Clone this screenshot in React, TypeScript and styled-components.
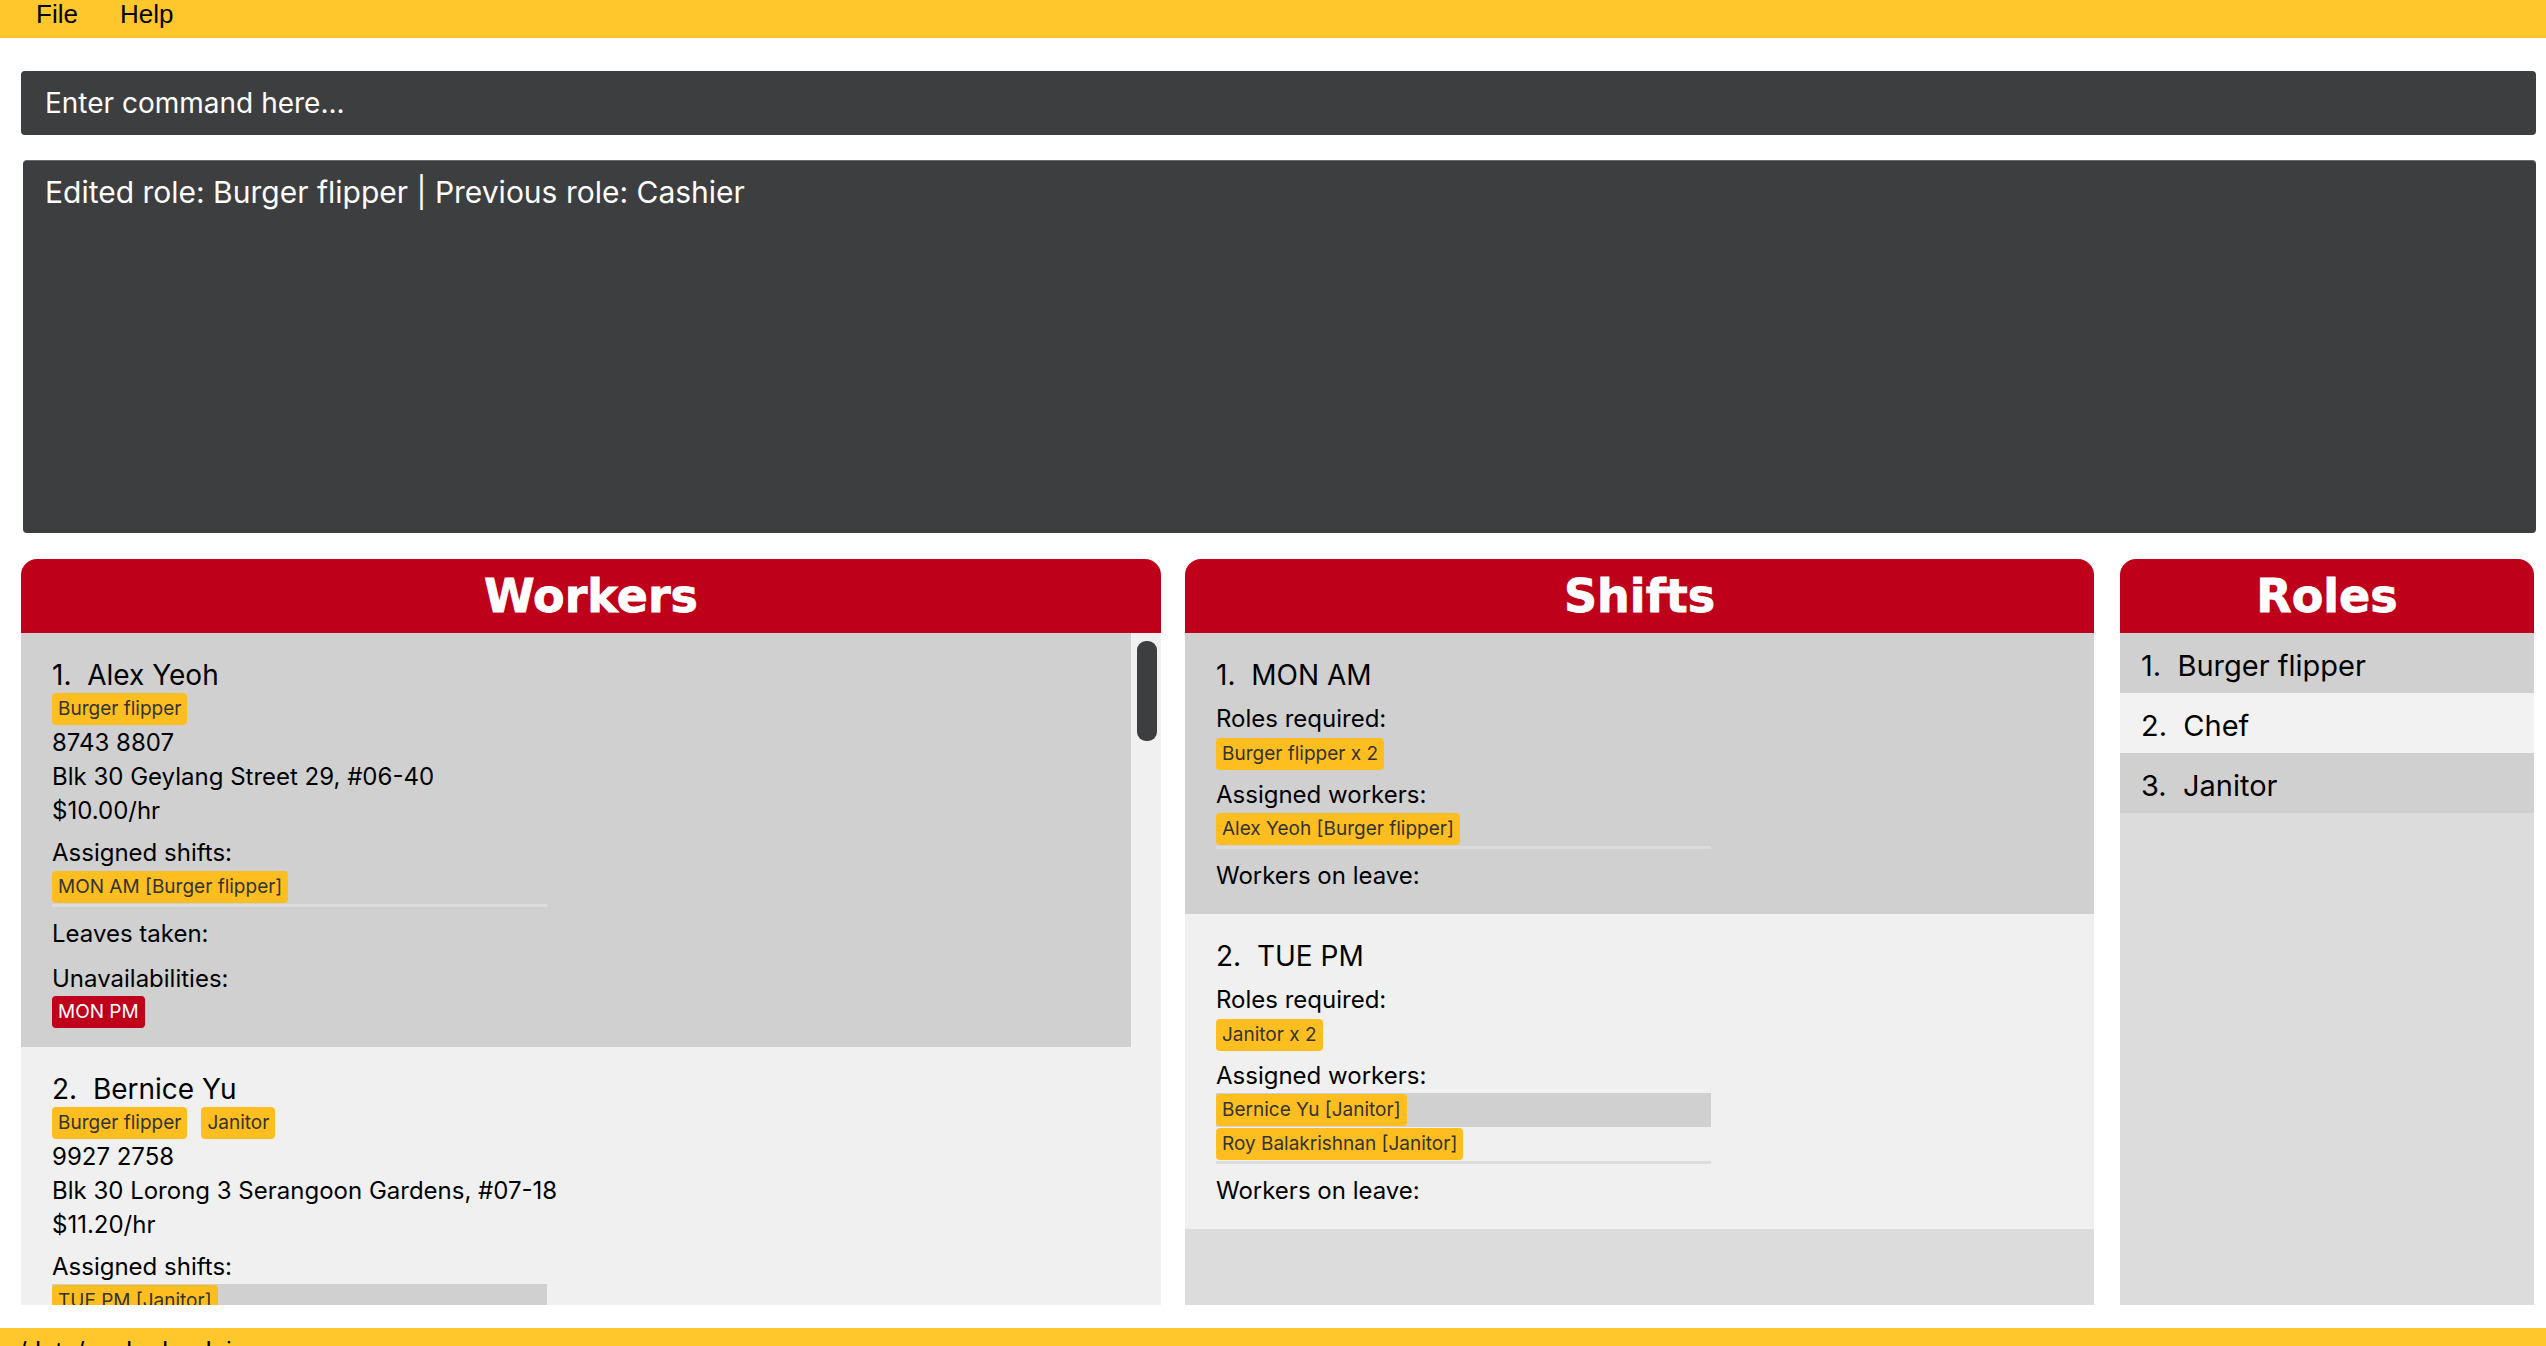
import React from "react";
import styled, { createGlobalStyle } from "styled-components";

const GlobalStyle = createGlobalStyle`
  html, body {
    margin: 0;
    padding: 0;
    background: #ffffff;
  }
  body {
    font-family: Inter, "Noto Sans", sans-serif;
    color: #000000;
  }
`;

type Worker = {
  name: string;
  roles: string[];
  phone: string;
  address: string;
  pay: string;
  shifts: string[];
  leaves: string[];
  unavailable: string[];
};

type Shift = {
  name: string;
  roles: string[];
  workers: string[];
  onLeave: string[];
};

const workers: Worker[] = [
  {
    name: "Alex Yeoh",
    roles: ["Burger flipper"],
    phone: "8743 8807",
    address: "Blk 30 Geylang Street 29, #06-40",
    pay: "$10.00/hr",
    shifts: ["MON AM [Burger flipper]"],
    leaves: [],
    unavailable: ["MON PM"],
  },
  {
    name: "Bernice Yu",
    roles: ["Burger flipper", "Janitor"],
    phone: "9927 2758",
    address: "Blk 30 Lorong 3 Serangoon Gardens, #07-18",
    pay: "$11.20/hr",
    shifts: ["TUE PM [Janitor]"],
    leaves: [],
    unavailable: [],
  },
];

const shifts: Shift[] = [
  {
    name: "MON AM",
    roles: ["Burger flipper x 2"],
    workers: ["Alex Yeoh [Burger flipper]"],
    onLeave: [],
  },
  {
    name: "TUE PM",
    roles: ["Janitor x 2"],
    workers: ["Bernice Yu [Janitor]", "Roy Balakrishnan [Janitor]"],
    onLeave: [],
  },
];

const roles = ["Burger flipper", "Chef", "Janitor"];

const Window = styled.div`
  width: 2546px;
  height: 1346px;
  overflow: hidden;
  display: flex;
  flex-direction: column;
`;

const MenuBar = styled.div`
  height: 38px;
  flex-shrink: 0;
  background: #ffc72c;
  display: flex;
  align-items: flex-start;
  gap: 42px;
  padding-left: 36px;
`;

const MenuItem = styled.span`
  font-family: "Liberation Sans", Arial, sans-serif;
  font-size: 26px;
  line-height: 28px;
  color: #000000;
`;

const Content = styled.div`
  display: flex;
  flex-direction: column;
  padding: 33px 10px 0 21px;
  flex-shrink: 0;
`;

const CommandBox = styled.input`
  height: 64px;
  box-sizing: border-box;
  border: none;
  outline: none;
  border-radius: 4px;
  background: #3d3e40;
  color: #ffffff;
  font-family: Inter, "Noto Sans", sans-serif;
  font-size: 28px;
  padding: 0 24px;
  &::placeholder {
    color: #ffffff;
    opacity: 1;
  }
`;

const ResultBox = styled.div`
  margin: 25px 0 0 2px;
  height: 373px;
  box-sizing: border-box;
  border-radius: 4px;
  background: #3d3e40;
  border-top: 1px solid #6a6b6d;
  color: #ffffff;
  font-size: 30px;
  line-height: 36px;
  padding: 13px 22px;
`;

const Panels = styled.div`
  margin-top: 26px;
  height: 746px;
  display: grid;
  grid-template-columns: 1140px 909px 416px;
  column-gap: 24px;
  & > :last-child {
    margin-left: 2px;
  }
`;

const Panel = styled.section`
  display: flex;
  flex-direction: column;
  min-height: 0;
`;

const PanelHeader = styled.div`
  height: 74px;
  flex-shrink: 0;
  background: #be001a;
  border-radius: 16px 16px 0 0;
  color: #ffffff;
  text-align: center;
  font-family: "DejaVu Sans", "Liberation Sans", sans-serif;
  font-weight: 700;
  font-size: 46px;
  line-height: 74px;
  -webkit-text-stroke: 0.8px #ffffff;
`;

const PanelBody = styled.div`
  flex: 1;
  min-height: 0;
  background: #dcdcdc;
  overflow: hidden;
  display: flex;
`;

const CardColumn = styled.div`
  flex: 1;
  min-width: 0;
  overflow: hidden;
  display: flex;
  flex-direction: column;
`;

const ScrollTrack = styled.div`
  width: 30px;
  flex-shrink: 0;
  background: #f0f0f0;
  display: flex;
  flex-direction: column;
`;

const ScrollThumb = styled.div`
  margin: 8px 4px 0 6px;
  height: 100px;
  border-radius: 9px;
  background: #3d3e40;
`;

const Card = styled.div<{ $alt: boolean }>`
  flex-shrink: 0;
  background: ${(p) => (p.$alt ? "#f0f0f0" : "#d0d0d0")};
  padding: 24px 20px 19px 31px;
  display: flex;
  flex-direction: column;
  align-items: flex-start;
`;

const ShiftCard = styled(Card)`
  padding-bottom: 21px;
`;

const Title = styled.div`
  font-size: 28px;
  line-height: 36px;
  white-space: pre;
`;

const Field = styled.div`
  font-size: 24px;
  line-height: 34px;
`;

const Label = styled(Field)<{ $mt: number }>`
  margin-top: ${(p) => p.$mt}px;
`;

const TagRow = styled.div<{ $mt?: number }>`
  display: flex;
  flex-wrap: wrap;
  gap: 14px;
  margin-top: ${(p) => p.$mt ?? 0}px;
`;

const Tag = styled.span<{ $red?: boolean }>`
  display: inline-block;
  height: 32px;
  box-sizing: border-box;
  padding: 3px 6px 0 6px;
  border-radius: 4px;
  background: ${(p) => (p.$red ? "#c0001b" : "#ffbe1f")};
  color: ${(p) => (p.$red ? "#ffffff" : "#333333")};
  font-size: 19px;
  line-height: 26px;
  white-space: nowrap;
`;

const TagList = styled.div<{ $mt: number }>`
  width: 495px;
  margin-top: ${(p) => p.$mt}px;
  border-bottom: 3px solid #dcdcdc;
  display: flex;
  flex-direction: column;
`;

const TagListRow = styled.div<{ $alt: boolean }>`
  height: 34px;
  box-sizing: border-box;
  padding-top: 1px;
  background: ${(p) => (p.$alt ? "transparent" : "#d0d0d0")};
`;

const RoleRow = styled.div<{ $alt: boolean }>`
  height: 60px;
  box-sizing: border-box;
  flex-shrink: 0;
  background: ${(p) => (p.$alt ? "#f2f2f2" : "#d0d0d0")};
  padding: 6px 0 0 21px;
  font-size: 29px;
  line-height: 54px;
  white-space: pre;
`;

const RoleColumn = styled.div`
  flex: 1;
  display: flex;
  flex-direction: column;
`;

const StatusBar = styled.div`
  margin-top: 23px;
  flex: 1;
  background: #ffc72c;
  padding: 9px 0 0 12px;
  font-family: "Liberation Sans", Arial, sans-serif;
  font-size: 26px;
  line-height: 28px;
`;

const TagListView = ({ items, mt }: { items: string[]; mt: number }) => (
  <TagList $mt={mt}>
    {items.map((item, i) => (
      <TagListRow key={item} $alt={i % 2 === 1}>
        <Tag>{item}</Tag>
      </TagListRow>
    ))}
  </TagList>
);

const WorkerCard = ({ worker, index }: { worker: Worker; index: number }) => (
  <Card $alt={index % 2 === 1}>
    <Title>{`${index + 1}.  ${worker.name}`}</Title>
    <TagRow>
      {worker.roles.map((r) => (
        <Tag key={r}>{r}</Tag>
      ))}
    </TagRow>
    <Field style={{ marginTop: 1 }}>{worker.phone}</Field>
    <Field>{worker.address}</Field>
    <Field>{worker.pay}</Field>
    <Label $mt={8}>Assigned shifts:</Label>
    <TagListView items={worker.shifts} mt={0} />
    <Label $mt={10}>Leaves taken:</Label>
    <Label $mt={11}>Unavailabilities:</Label>
    <TagRow>
      {worker.unavailable.map((u) => (
        <Tag key={u} $red>
          {u}
        </Tag>
      ))}
    </TagRow>
  </Card>
);

const ShiftItem = ({ shift, index }: { shift: Shift; index: number }) => (
  <ShiftCard $alt={index % 2 === 1}>
    <Title>{`${index + 1}.  ${shift.name}`}</Title>
    <Label $mt={9}>Roles required:</Label>
    <TagRow $mt={2}>
      {shift.roles.map((r) => (
        <Tag key={r}>{r}</Tag>
      ))}
    </TagRow>
    <Label $mt={8}>Assigned workers:</Label>
    <TagListView items={shift.workers} mt={0} />
    <Label $mt={10}>Workers on leave:</Label>
  </ShiftCard>
);

export default function App() {
  return (
    <>
      <GlobalStyle />
      <Window>
        <MenuBar>
          <MenuItem>File</MenuItem>
          <MenuItem>Help</MenuItem>
        </MenuBar>
        <Content>
          <CommandBox placeholder="Enter command here..." readOnly />
          <ResultBox>Edited role: Burger flipper | Previous role: Cashier</ResultBox>
          <Panels>
            <Panel>
              <PanelHeader>Workers</PanelHeader>
              <PanelBody>
                <CardColumn>
                  {workers.map((w, i) => (
                    <WorkerCard key={w.name} worker={w} index={i} />
                  ))}
                </CardColumn>
                <ScrollTrack>
                  <ScrollThumb />
                </ScrollTrack>
              </PanelBody>
            </Panel>
            <Panel>
              <PanelHeader>Shifts</PanelHeader>
              <PanelBody>
                <CardColumn>
                  {shifts.map((s, i) => (
                    <ShiftItem key={s.name} shift={s} index={i} />
                  ))}
                </CardColumn>
              </PanelBody>
            </Panel>
            <Panel>
              <PanelHeader>Roles</PanelHeader>
              <PanelBody>
                <RoleColumn>
                  {roles.map((r, i) => (
                    <RoleRow key={r} $alt={i % 2 === 1}>{`${i + 1}.  ${r}`}</RoleRow>
                  ))}
                </RoleColumn>
              </PanelBody>
            </Panel>
          </Panels>
        </Content>
        <StatusBar>./data/workerbook.json</StatusBar>
      </Window>
    </>
  );
}
